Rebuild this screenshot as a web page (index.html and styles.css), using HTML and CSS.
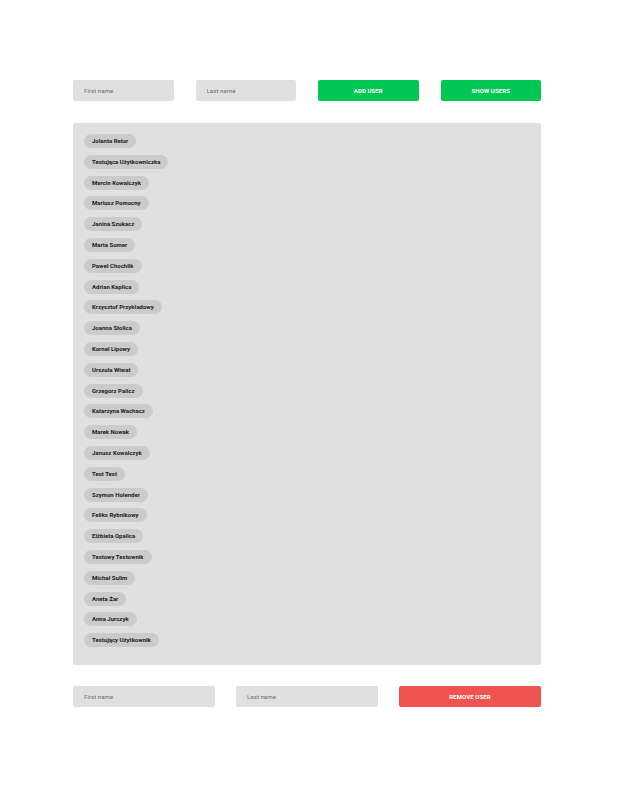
FILE: index.html
```html
<!DOCTYPE html>
<html lang="pl">
<head>
<meta charset="utf-8">
<title>Users</title>
<link rel="stylesheet" href="styles.css">
</head>
<body>
<div class="app">
  <div class="row row-top">
    <input class="field" type="text" placeholder="First name">
    <input class="field" type="text" placeholder="Last name">
    <button class="btn btn-green">Add user</button>
    <button class="btn btn-green">Show users</button>
  </div>
  <div class="panel">
    <span class="chip">Jolanta Retor</span>
    <span class="chip">Testująca Użytkowniczka</span>
    <span class="chip">Marcin Kowalczyk</span>
    <span class="chip">Mariusz Pomocny</span>
    <span class="chip">Janina Szukacz</span>
    <span class="chip">Marta Somer</span>
    <span class="chip">Paweł Chochlik</span>
    <span class="chip">Adrian Kapłica</span>
    <span class="chip">Krzysztof Przykładowy</span>
    <span class="chip">Joanna Stolica</span>
    <span class="chip">Kornel Lipowy</span>
    <span class="chip">Urszula Wiwat</span>
    <span class="chip">Grzegorz Palicz</span>
    <span class="chip">Katarzyna Wachacz</span>
    <span class="chip">Marek Nowak</span>
    <span class="chip">Janusz Kowalczyk</span>
    <span class="chip">Test Test</span>
    <span class="chip">Szymon Holender</span>
    <span class="chip">Feliks Rybnikowy</span>
    <span class="chip">Elżbieta Opalica</span>
    <span class="chip">Testowy Testownik</span>
    <span class="chip">Michał Sulim</span>
    <span class="chip">Aneta Żar</span>
    <span class="chip">Anna Jurczyk</span>
    <span class="chip">Testujący Użytkownik</span>
  </div>
  <div class="row row-bottom">
    <input class="field" type="text" placeholder="First name">
    <input class="field" type="text" placeholder="Last name">
    <button class="btn btn-red">Remove user</button>
  </div>
</div>
</body>
</html>
```
FILE: styles.css
```css
* { box-sizing: border-box; }
html, body { margin: 0; padding: 0; background: #ffffff; }
body { font-family: Roboto, "Liberation Sans", Arial, sans-serif; }

.app {
  width: 468px;
  margin-left: 73px;
  padding-top: 80px;
}

.row {
  display: grid;
  gap: 22px;
}
.row-top { grid-template-columns: repeat(4, 1fr); }
.row-bottom { grid-template-columns: repeat(3, 1fr); gap: 21px; margin-top: 21px; }

.field {
  height: 21px;
  border: none;
  border-radius: 2px;
  background: #e0e0e0;
  padding: 0 11px;
  font-family: inherit;
  font-size: 6.2px;
  color: #555;
  outline: none;
  width: 100%;
}
.field::placeholder { color: #6f6f6f; }

.btn {
  height: 21px;
  border: none;
  border-radius: 2px;
  color: #ffffff;
  font-family: inherit;
  font-weight: 700;
  font-size: 6px;
  text-transform: uppercase;
  letter-spacing: 0.1px;
  padding: 0;
  width: 100%;
}
.btn-green { background: #00c853; }
.btn-red { background: #ef5350; }

.panel {
  margin-top: 22px;
  background: #e0e0e0;
  border-radius: 2px;
  padding: 11px;
  height: 542px;
  display: flex;
  flex-direction: column;
  align-items: flex-start;
  gap: 6.8px;
}

.chip {
  display: inline-flex;
  align-items: center;
  height: 14px;
  padding: 0 8px;
  border-radius: 7px;
  background: #cbcbcb;
  color: #1a1a1a;
  font-weight: 700;
  font-size: 6px;
  line-height: 1;
  white-space: nowrap;
}
```
